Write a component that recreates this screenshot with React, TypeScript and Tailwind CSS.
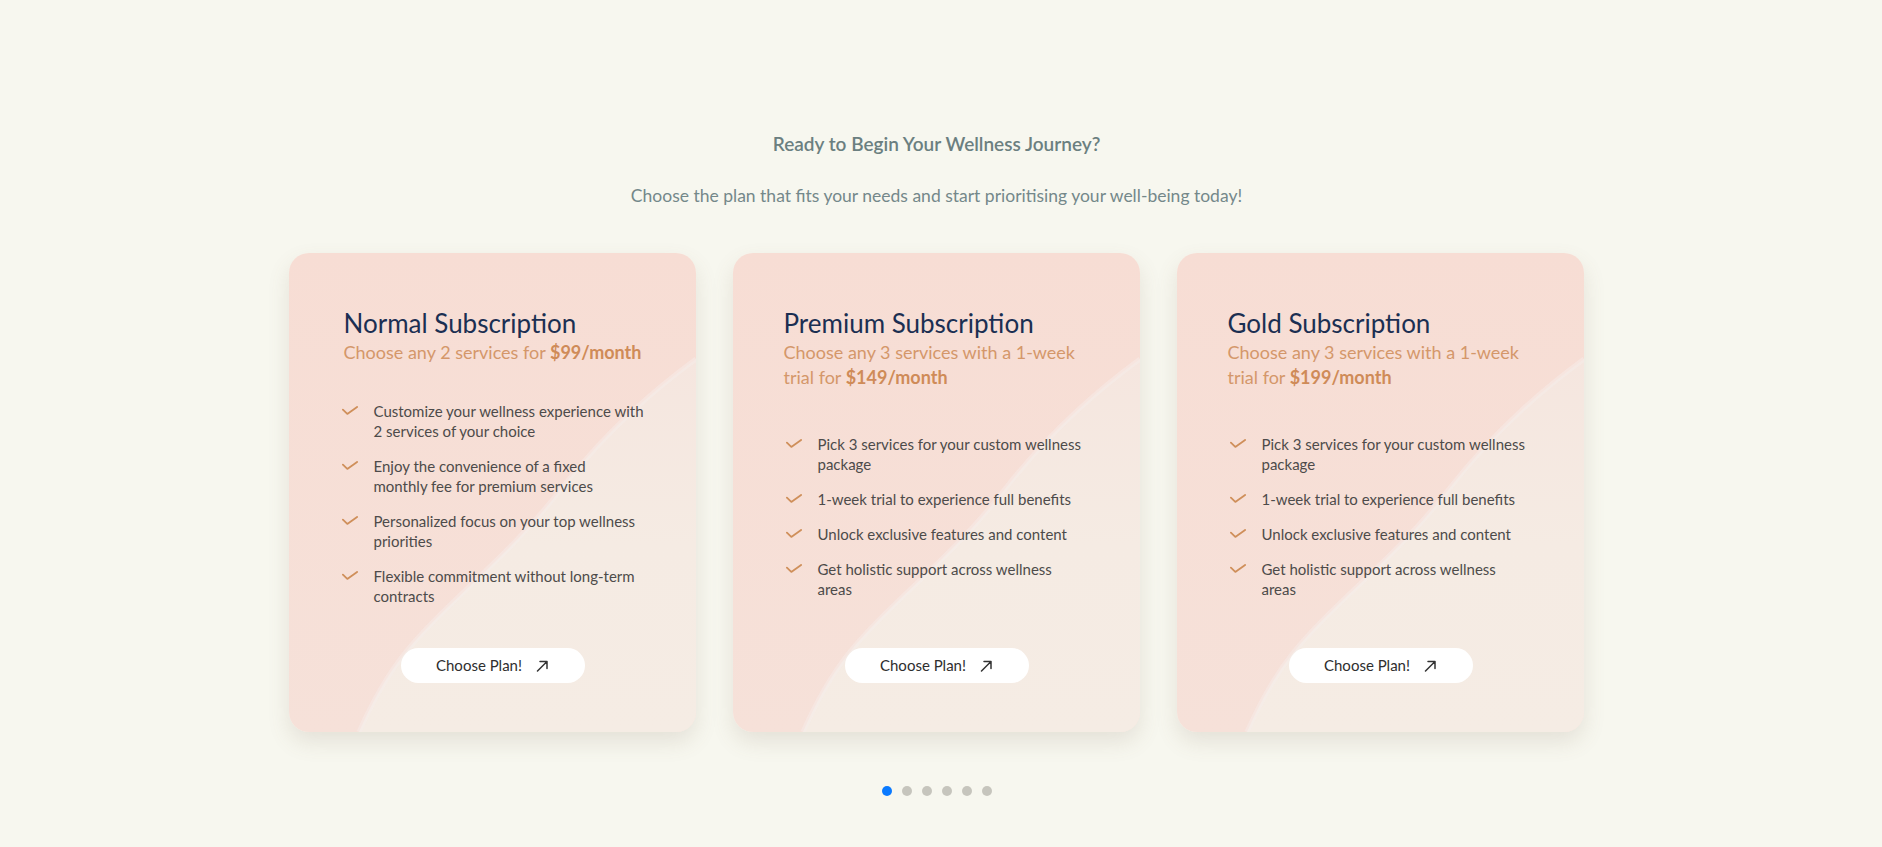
interface Plan {
    title: string;
    lead: string;
    price: string;
    features: string[];
}

const plans: Plan[] = [
    {
        title: "Normal Subscription",
        lead: "Choose any 2 services for",
        price: "$99/month",
        features: [
            "Customize your wellness experience with 2 services of your choice",
            "Enjoy the convenience of a fixed\nmonthly fee for premium services",
            "Personalized focus on your top wellness priorities",
            "Flexible commitment without long-term contracts",
        ],
    },
    {
        title: "Premium Subscription",
        lead: "Choose any 3 services with a 1-week trial for",
        price: "$149/month",
        features: [
            "Pick 3 services for your custom wellness package",
            "1-week trial to experience full benefits",
            "Unlock exclusive features and content",
            "Get holistic support across wellness areas",
        ],
    },
    {
        title: "Gold Subscription",
        lead: "Choose any 3 services with a 1-week trial for",
        price: "$199/month",
        features: [
            "Pick 3 services for your custom wellness package",
            "1-week trial to experience full benefits",
            "Unlock exclusive features and content",
            "Get holistic support across wellness areas",
        ],
    },
];

const wave = "M407 106 C 372 132, 322 172, 272 236 C 218 306, 156 350, 116 400 C 96 425, 82 452, 70 479";

function CardBackground() {
    return (
        <svg className="absolute inset-0 h-full w-full" viewBox="0 0 407 479" preserveAspectRatio="none">
            <defs>
                <linearGradient id="pinkfade" x1="0" y1="0" x2="0" y2="1">
                    <stop offset="0" stopColor="#f7ddd4" />
                    <stop offset="1" stopColor="#f6e1d9" />
                </linearGradient>
                <linearGradient id="lightfade" x1="0" y1="0" x2="0" y2="1">
                    <stop offset="0" stopColor="#f5e6df" />
                    <stop offset="0.5" stopColor="#f5ebe3" />
                    <stop offset="1" stopColor="#f5ece4" />
                </linearGradient>
            </defs>
            <rect width="407" height="479" fill="url(#pinkfade)" />
            <path d={`${wave} L407 479 Z`} fill="url(#lightfade)" />
            <path d={wave} fill="none" stroke="#f7eeea" strokeWidth="5" opacity="0.45" />
        </svg>
    );
}

function Tick() {
    return (
        <svg width="16" height="9" viewBox="0 0 16 9" className="mt-[5px] shrink-0">
            <path d="M0.9 3.7 L5.3 7.9 L15.1 0.9" fill="none" stroke="#cf8f5a" strokeWidth="1.8" strokeLinecap="round" strokeLinejoin="round" />
        </svg>
    );
}

function Arrow() {
    return (
        <svg width="13" height="12" viewBox="0 0 13 12" className="shrink-0">
            <path d="M1.5 11 L11 1.5 M4 1.5 H11 V8.5" fill="none" stroke="#333" strokeWidth="1.5" strokeLinecap="round" strokeLinejoin="round" />
        </svg>
    );
}

function PlanCard({ plan }: { plan: Plan }) {
    return (
        <div className="relative w-[407px] h-[479px] shrink-0 overflow-hidden rounded-[20px] shadow-[0_10px_22px_rgba(120,100,80,0.14)]">
            <CardBackground />
            <div className="relative flex h-full flex-col items-center justify-between pt-[53px] pb-[49px]">
                <div className="max-w-[306px]">
                    <h3 className="text-[26px] leading-[34px] text-[#1b2f52]">{plan.title}</h3>
                    <p className="text-[18px] leading-[25px] text-[#d4976a]">
                        {plan.lead} <span className="font-bold text-[#cf8b58]">{plan.price}</span>
                    </p>
                </div>

                <ul className="-mt-[6px] flex max-w-[302px] flex-col gap-[15px]">
                    {plan.features.map((f) => (
                        <li key={f} className="flex gap-[16px] text-[15px] leading-[20px] text-[#4d4b4a]">
                            <Tick />
                            <span className="whitespace-pre-line">{f}</span>
                        </li>
                    ))}
                </ul>

                <button className="flex h-[35px] w-[184px] items-center justify-center gap-[14px] rounded-full bg-white text-[15px] text-[#2e2e2e]">
                    Choose Plan!
                    <Arrow />
                </button>
            </div>
        </div>
    );
}

export default function App() {
    return (
        <div className="min-h-screen bg-[#f7f7ef] pr-[9px] pt-[130px] font-['Lato',sans-serif]">
            <div className="flex flex-col items-center">
                <h2 className="text-[19px] leading-[28px] font-semibold text-[#6b7f80]">Ready to Begin Your Wellness Journey?</h2>
                <p className="mt-[24px] text-[17.5px] leading-[28px] text-[#74888a]">
                    Choose the plan that fits your needs and start prioritising your well-being today!
                </p>
            </div>

            <div className="mt-[43px] flex justify-center gap-[37px]">
                {plans.map((p) => (
                    <PlanCard key={p.title} plan={p} />
                ))}
            </div>

            <div className="mt-[54px] flex justify-center gap-[10px]">
                {[0, 1, 2, 3, 4, 5].map((i) => (
                    <span key={i} className={i === 0 ? "h-[10px] w-[10px] rounded-full bg-[#0a7aff]" : "h-[10px] w-[10px] rounded-full bg-[#c6c5bd]"} />
                ))}
            </div>
        </div>
    );
}
